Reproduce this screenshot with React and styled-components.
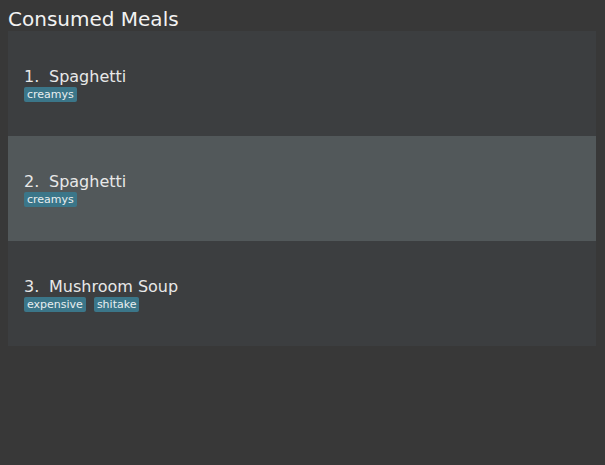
import styled, { createGlobalStyle } from "styled-components";

const meals = [
  { name: "Spaghetti", tags: ["creamys"] },
  { name: "Spaghetti", tags: ["creamys"], active: true },
  { name: "Mushroom Soup", tags: ["expensive", "shitake"] },
];

export default function App() {
  return (
    <>
      <GlobalStyle />
      <Title>Consumed Meals</Title>
      <List>
        {meals.map((meal, i) => (
          <Row key={i} $active={meal.active}>
            <Name>
              <Index>{i + 1}.</Index>
              {meal.name}
            </Name>
            <Tags>
              {meal.tags.map((tag) => (
                <Tag key={tag}>{tag}</Tag>
              ))}
            </Tags>
          </Row>
        ))}
      </List>
    </>
  );
}

const GlobalStyle = createGlobalStyle`
  html, body {
    background: #383838;
  }
  body {
    margin: 8px 9px 8px 8px;
    font-family: "DejaVu Sans", sans-serif;
    color: #e6e6e6;
  }
`;

const Title = styled.h1`
  margin: 0;
  font-size: 20px;
  font-weight: normal;
  line-height: 23px;
  color: #f2f2f2;
`;

const List = styled.ul`
  list-style: none;
  margin: 0;
  padding: 0;
  background: #3c3e40;
`;

const Row = styled.li`
  height: 105px;
  padding: 1px 16px 0;
  box-sizing: border-box;
  display: flex;
  flex-direction: column;
  justify-content: center;
  background: ${(props) => (props.$active ? "#52585a" : "#3c3e40")};
`;

const Name = styled.div`
  font-size: 16px;
  line-height: 19px;
  color: #e8e8e8;
`;

const Index = styled.span`
  display: inline-block;
  width: 25px;
`;

const Tags = styled.div`
  display: flex;
  gap: 8px;
  margin-top: 1px;
`;

const Tag = styled.span`
  background: #3b7689;
  color: #e8eef0;
  font-size: 11px;
  line-height: 15px;
  padding: 0 3px;
  border-radius: 2px;
`;
